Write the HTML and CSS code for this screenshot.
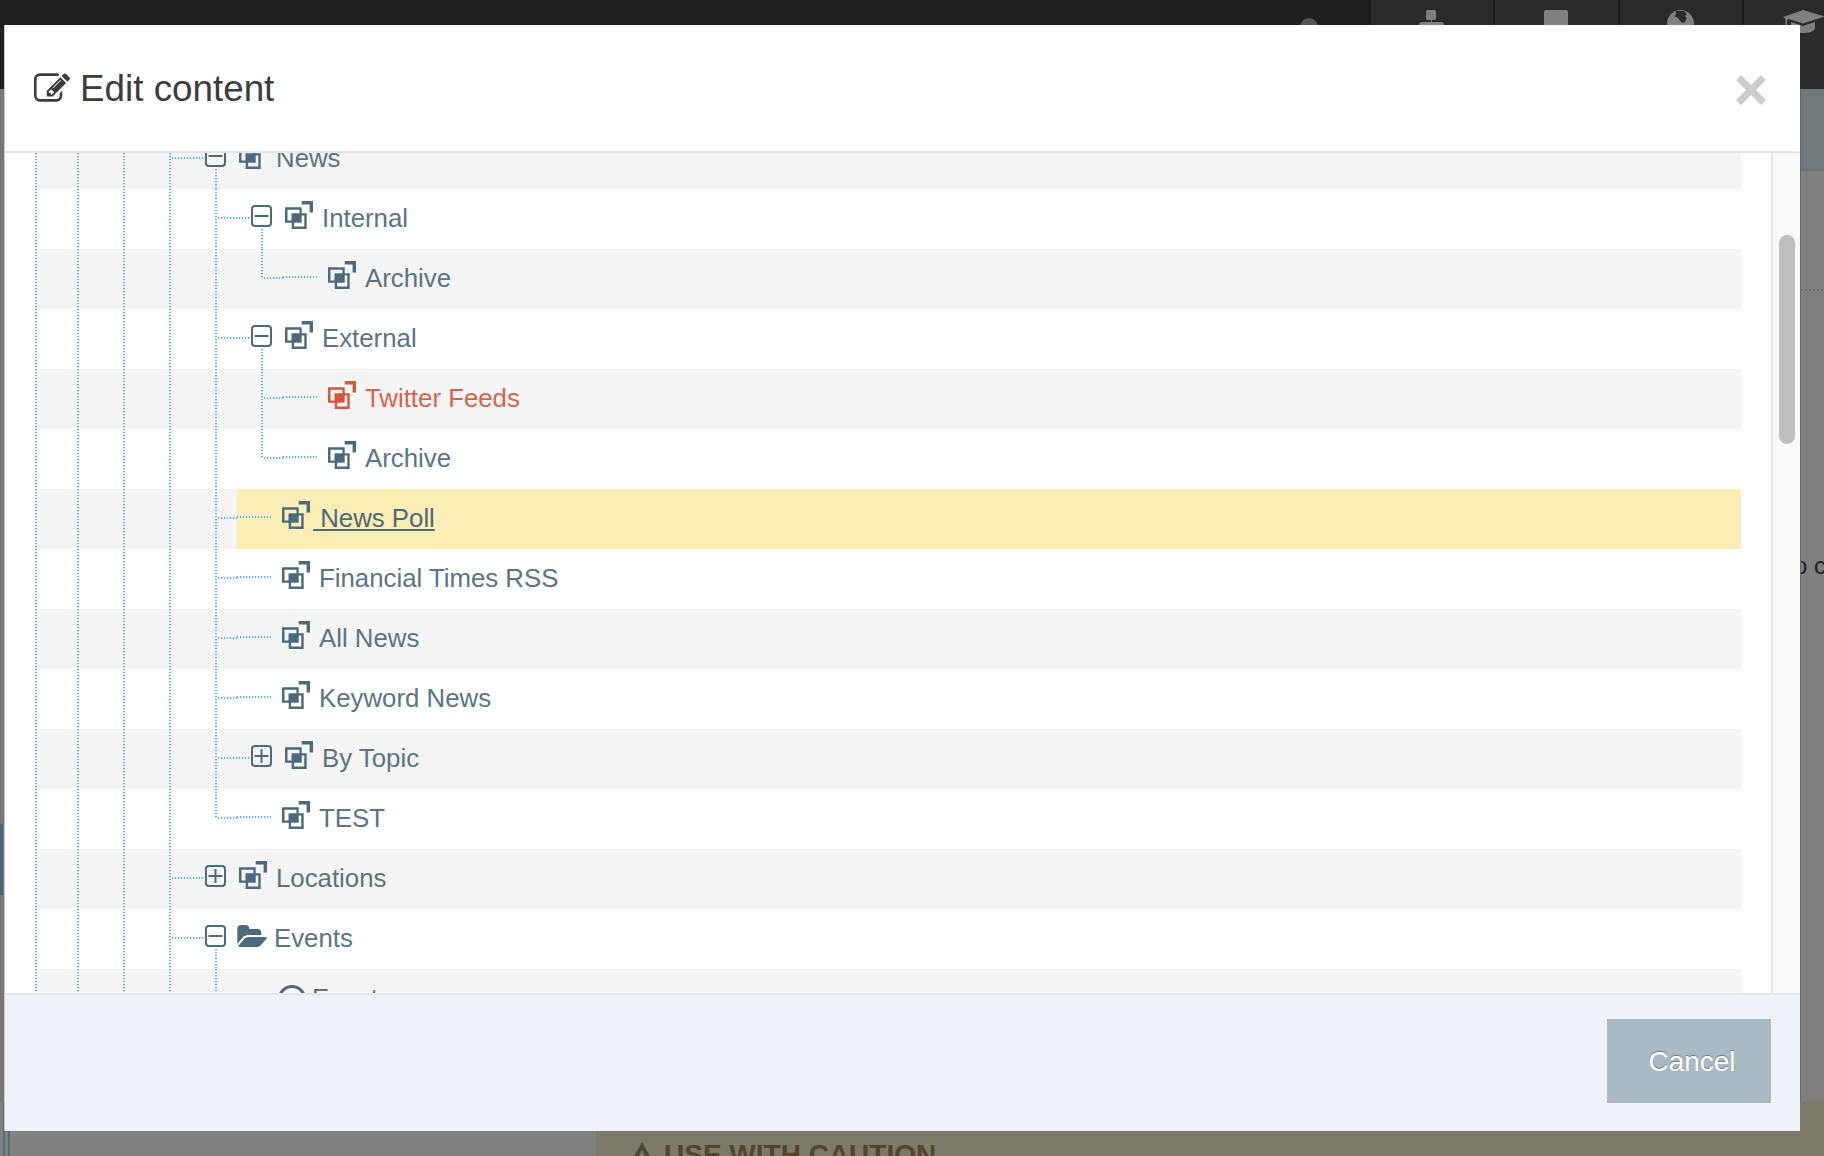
FILE: index.html
```html
<!DOCTYPE html>
<html lang="en">
<head>
<meta charset="utf-8">
<title>Edit content</title>
<link rel="stylesheet" href="styles.css">
</head>
<body>
<svg class="defs" aria-hidden="true">
  <symbol id="page" viewBox="0 0 28 28">
    <path d="M0 6.3h16.7v5.9h5v15.8H6.700v-6.200H0zM2.500 8.700v10.700h4.200v-7.200h7.700V8.700zM9.100 14.600v11H19.300v-11z" fill-rule="evenodd"/>
    <path d="M6.700 13h10v8.700h-10z"/>
    <path d="M16.700 0H28v11.400h-3.400V3.400h-7.900z"/>
  </symbol>
  <symbol id="minus" viewBox="0 0 21 22">
    <rect x="1" y="1" width="19" height="20" rx="3" fill="none" stroke="currentColor" stroke-width="2"/>
    <path d="M3.500 10h14v2h-14z"/>
  </symbol>
  <symbol id="plus" viewBox="0 0 21 22">
    <rect x="1" y="1" width="19" height="20" rx="3" fill="none" stroke="currentColor" stroke-width="2"/>
    <path d="M3.500 10h14v2h-14z"/>
    <path d="M9.500 4h2v14h-2z"/>
  </symbol>
</svg>

<div class="page">
  <header class="topbar">
    <span class="dome"></span>
    <div class="cell">
      <svg class="tb-icon tb-site" viewBox="0 0 25 24"><path d="M8.500 0h7a1.500 1.500 0 0 1 1.500 1.500v7a1.500 1.500 0 0 1-1.500 1.500H13v2h9a3 3 0 0 1 3 3v3H0v-3a3 3 0 0 1 3-3h9v-2H8.500A1.500 1.500 0 0 1 7 8.500v-7A1.500 1.500 0 0 1 8.500 0z"/></svg>
    </div>
    <div class="cell">
      <svg class="tb-icon tb-square" viewBox="0 0 24 24"><rect width="24" height="24" rx="2"/></svg>
    </div>
    <div class="cell">
      <svg class="tb-icon tb-globe" viewBox="0 0 27 27"><circle cx="13.500" cy="13.500" r="13.500"/><path class="land" d="M9 1l8 0 3 3-2 2 2 2-3 5-3-1-3-4-4-2 2-1z"/></svg>
    </div>
    <div class="cell cell-last">
      <svg class="tb-cap" viewBox="0 0 42 24"><path d="M20 0l22 6.500-22 7-14-4.500-2 1v6l1.500 6H1l1.500-6v-7L0 7z"/><path d="M8 12l12 4 12-4v6c0 3-5.500 5-12 5s-12-2-12-5z"/></svg>
    </div>
  </header>
  <div class="upper">
    <div class="left-strip"><span class="left-slab"></span></div>
    <div class="right-strip">
      <div class="right-head"></div>
      <div class="right-dots"></div>
      <div class="right-text">o c</div>
    </div>
  </div>
  <div class="lower">
    <div class="lower-left"><span class="lower-rails"></span></div>
    <div class="caution">
      <svg class="caution-icon" viewBox="0 0 22 20"><path fill-rule="evenodd" d="M11 0l11 20H0zM11 9l-3.500 7h7z"/></svg>
      <span class="caution-text">USE WITH CAUTION</span>
    </div>
  </div>
</div>

<div class="modal">
  <div class="modal-head">
    <svg class="title-icon" viewBox="0 128 1792 1408"><path d="M888 1184l116-116-152-152-116 116v56h96v96h56zm440-720q-16-16-33 1l-350 350q-17 17-1 33t33-1l350-350q17-17 1-33zm80 594v190q0 119-84.500 203.500t-203.500 84.500h-832q-119 0-203.500-84.500t-84.500-203.500v-832q0-119 84.500-203.500t203.500-84.500h832q63 0 117 25 15 7 18 23 3 17-9 29l-49 49q-14 14-32 8-23-6-45-6h-832q-66 0-113 47t-47 113v832q0 66 47 113t113 47h832q66 0 113-47t47-113v-126q0-13 9-22l64-64q15-15 35-7t20 29zm-96-738l288 288-672 672h-288v-288zm444 132l-92 92-288-288 92-92q28-28 68-28t68 28l152 152q28 28 28 68t-28 68z"/></svg>
    <h1 class="title">Edit content</h1>
    <svg class="close" viewBox="0 0 30 30"><path d="M5 0l10 10L25 0l5 5-10 10 10 10-5 5-10-10-10 10-5-5 10-10L0 5z"/></svg>
  </div>
  <div class="modal-body">
    <div class="tree-view">
      <div class="tree">
        <div class="row"><i class="g g1"></i><i class="g"></i><i class="g"></i><i class="b"></i><span class="toggle open"><svg><use href="#minus"/></svg></span><svg class="icon"><use href="#page"/></svg><span class="label">News</span></div>
        <div class="row"><i class="g g1"></i><i class="g"></i><i class="g"></i><i class="g"></i><i class="b"></i><span class="toggle open"><svg><use href="#minus"/></svg></span><svg class="icon"><use href="#page"/></svg><span class="label">Internal</span></div>
        <div class="row"><i class="g g1"></i><i class="g"></i><i class="g"></i><i class="g"></i><i class="g"></i><i class="b stub last"></i><div class="node"><i class="hline"></i><svg class="icon"><use href="#page"/></svg><span class="label">Archive</span></div></div>
        <div class="row"><i class="g g1"></i><i class="g"></i><i class="g"></i><i class="g"></i><i class="b"></i><span class="toggle open"><svg><use href="#minus"/></svg></span><svg class="icon"><use href="#page"/></svg><span class="label">External</span></div>
        <div class="row"><i class="g g1"></i><i class="g"></i><i class="g"></i><i class="g"></i><i class="g"></i><i class="b stub"></i><div class="node alert"><i class="hline"></i><svg class="icon"><use href="#page"/></svg><span class="label">Twitter Feeds</span></div></div>
        <div class="row"><i class="g g1"></i><i class="g"></i><i class="g"></i><i class="g"></i><i class="g"></i><i class="b stub last"></i><div class="node"><i class="hline"></i><svg class="icon"><use href="#page"/></svg><span class="label">Archive</span></div></div>
        <div class="row"><i class="g g1"></i><i class="g"></i><i class="g"></i><i class="g"></i><i class="b stub"></i><div class="node selected"><i class="hline"></i><svg class="icon"><use href="#page"/></svg><a class="link"> News Poll</a></div></div>
        <div class="row"><i class="g g1"></i><i class="g"></i><i class="g"></i><i class="g"></i><i class="b stub"></i><div class="node"><i class="hline"></i><svg class="icon"><use href="#page"/></svg><span class="label">Financial Times RSS</span></div></div>
        <div class="row"><i class="g g1"></i><i class="g"></i><i class="g"></i><i class="g"></i><i class="b stub"></i><div class="node"><i class="hline"></i><svg class="icon"><use href="#page"/></svg><span class="label">All News</span></div></div>
        <div class="row"><i class="g g1"></i><i class="g"></i><i class="g"></i><i class="g"></i><i class="b stub"></i><div class="node"><i class="hline"></i><svg class="icon"><use href="#page"/></svg><span class="label">Keyword News</span></div></div>
        <div class="row"><i class="g g1"></i><i class="g"></i><i class="g"></i><i class="g"></i><i class="b"></i><span class="toggle"><svg><use href="#plus"/></svg></span><svg class="icon"><use href="#page"/></svg><span class="label">By Topic</span></div>
        <div class="row"><i class="g g1"></i><i class="g"></i><i class="g"></i><i class="g"></i><i class="b stub last"></i><div class="node"><i class="hline"></i><svg class="icon"><use href="#page"/></svg><span class="label">TEST</span></div></div>
        <div class="row"><i class="g g1"></i><i class="g"></i><i class="g"></i><i class="b"></i><span class="toggle"><svg><use href="#plus"/></svg></span><svg class="icon"><use href="#page"/></svg><span class="label">Locations</span></div>
        <div class="row"><i class="g g1"></i><i class="g"></i><i class="g"></i><i class="b"></i><span class="toggle open"><svg><use href="#minus"/></svg></span><svg class="folder" viewBox="0 128 1879 1408"><path d="M1879 952q0 31-31 66l-336 396q-43 51-120.500 86.500t-143.500 35.500h-1088q-34 0-60.500-13t-26.500-43q0-31 31-66l336-396q43-51 120.500-86.500t143.500-35.500h1088q34 0 60.500 13t26.500 43zm-343-344v160h-832q-94 0-197 47.500t-164 119.500l-337 396-5 6q0-4-.5-12.500t-.5-12.500v-960q0-92 66-158t158-66h320q92 0 158 66t66 158v32h544q92 0 158 66t66 158z"/></svg><span class="label">Events</span></div>
        <div class="row"><i class="g g1"></i><i class="g"></i><i class="g"></i><i class="g"></i><i class="g g-short"></i><svg class="clock" viewBox="0 0 28 28"><circle cx="14" cy="14" r="12.500"/></svg><span class="label label-event">Events</span></div>
      </div>
    </div>
    <div class="track"><div class="thumb"></div></div>
  </div>
  <div class="modal-foot">
    <button class="cancel" type="button">Cancel</button>
  </div>
</div>
</body>
</html>
```
FILE: styles.css
```css
:root {
  --ink: #4d6a7c;
  --dot: #58aee6;
  --dot-soft: #cfe7f7;
  --vdots: repeating-linear-gradient(to bottom, var(--dot) 0 1px, var(--dot-soft) 1px 2px, transparent 2px 3px);
  --hdots: repeating-linear-gradient(to right, var(--dot) 0 1px, var(--dot-soft) 1px 2px, transparent 2px 3px);
}

* { box-sizing: border-box; }

html, body {
  margin: 0;
  height: 100%;
  overflow: hidden;
}

body {
  font-family: "Liberation Sans", Arial, sans-serif;
  background: #808080;
}

.defs { display: none; }

/* Dimmed page behind the dialog */
.page {
  height: 1156px;
  display: flex;
  flex-direction: column;
}

.topbar {
  flex: none;
  height: 89px;
  background: linear-gradient(to right, #202020 0, #202020 1100px, #1e1e1e 1366px);
  display: flex;
  justify-content: flex-end;
  overflow: hidden;
}

.dome {
  width: 18px;
  height: 18px;
  margin: 18px 51px 0 0;
  border-radius: 50%;
  background: #555;
}

.cell {
  width: 124.500px;
  background: #2a2a2a;
  border-left: 2px solid #1b1b1b;
  display: flex;
  justify-content: center;
  padding-top: 10px;
}

.cell-last {
  width: 82px;
  justify-content: flex-start;
  padding-left: 39px;
}

.tb-icon, .tb-cap { fill: #808080; flex: none; }
.tb-site { width: 25px; height: 24px; }
.tb-square { width: 24px; height: 24px; }
.tb-globe { width: 27px; height: 27px; }
.tb-globe .land { fill: #2a2a2a; }
.tb-cap { width: 42px; height: 24px; }

.upper {
  flex: 1;
  display: flex;
  justify-content: space-between;
}

.left-strip {
  width: 4px;
  background: #777;
  padding-top: 735px;
}

.left-slab {
  display: block;
  width: 3px;
  height: 71px;
  background: #4a6272;
}

.right-strip {
  width: 25px;
  border-left: 2px solid #666;
}

.right-head {
  height: 82px;
  background: #72787a;
}

.right-dots {
  height: 2px;
  margin-top: 118px;
  background: repeating-linear-gradient(to right, #6c6c6c 0 2px, transparent 2px 4px);
}

.right-text {
  margin-top: 260px;
  font-size: 24px;
  line-height: 30px;
  color: #222;
  white-space: nowrap;
  text-indent: -7px;
  overflow: hidden;
}

.lower {
  flex: none;
  height: 55px;
  display: flex;
}

.lower-left {
  flex: none;
  width: 596px;
  padding-left: 3px;
}

.lower-rails {
  display: block;
  width: 7px;
  height: 100%;
  border-left: 2px solid #5a6a75;
  border-right: 2px solid #5a6a75;
}

.caution {
  flex: 1;
  background: #7c7a6b;
  display: flex;
  align-items: flex-start;
  gap: 12px;
  padding: 40px 0 0 36px;
  overflow: hidden;
}

.caution-icon {
  flex: none;
  width: 20px;
  height: 20px;
  fill: #54452b;
}

.caution-text {
  font-weight: 700;
  font-size: 28px;
  line-height: 28px;
  color: #54452b;
}

/* Dialog */
.modal {
  position: absolute;
  top: 25px;
  left: 4px;
  width: 1796px;
  height: 1106px;
  background: #fff;
  border-left: 1px solid #c9c9c9;
  display: flex;
  flex-direction: column;
}

.modal-head {
  flex: none;
  height: 128px;
  border-bottom: 2px solid #e5e5e5;
  display: flex;
  align-items: center;
  padding: 0 34px 0 29px;
}

.title-icon {
  flex: none;
  width: 36px;
  height: 29px;
  fill: #3c3c3c;
  margin: 0 10px 2px 0;
}

.title {
  flex: 1;
  margin: 2px 0 0;
  font-weight: 400;
  font-size: 36.800px;
  line-height: 44px;
  color: #3c3c3c;
}

.close {
  flex: none;
  width: 30px;
  height: 30px;
  margin-top: 4px;
  fill: #cdcdcd;
}

.modal-body {
  flex: none;
  height: 840px;
  display: flex;
  overflow: hidden;
}

.tree-view {
  flex: 1;
  min-width: 0;
  overflow: hidden;
}

.tree {
  margin: -24px 30px 0 30px;
  color: var(--ink);
}

.row {
  height: 60px;
  display: flex;
  align-items: center;
}

/* The stripe starts one pixel in, so the first dotted rule straddles its edge */
.row:nth-child(odd) {
  background: linear-gradient(#f5f5f5, #f5f5f5) 1px 0 no-repeat;
}

.g, .b {
  flex: none;
  align-self: stretch;
  background-repeat: no-repeat;
}

.g {
  width: 46px;
  background-image: var(--vdots);
  background-size: 2px 100%;
}

.g1 {
  width: 42px;
}

.g-short {
  width: 63px;
}

.b {
  width: 36px;
  background-image: var(--vdots), var(--hdots);
  background-size: 2px 100%, calc(100% - 4px) 2px;
  background-position: 0 0, 3px 28px;
}

.b.stub {
  width: 22px;
  background-size: 2px 100%, calc(100% - 3px) 2px;
}

.b.last {
  background-size: 2px 30px, calc(100% - 3px) 2px;
}

.toggle {
  position: relative;
  flex: none;
  width: 21px;
  height: 22px;
  margin: 0 13px 6px 0;
  fill: var(--ink);
  color: var(--ink);
}

.toggle svg {
  display: block;
  width: 21px;
  height: 22px;
}

.toggle.open::after {
  content: "";
  position: absolute;
  top: 24px;
  left: 10px;
  width: 2px;
  height: 20px;
  background: var(--vdots);
}

.icon {
  flex: none;
  width: 28px;
  height: 28px;
  margin-bottom: 8px;
  fill: currentColor;
}

.folder {
  flex: none;
  width: 30px;
  height: 22px;
  margin: 0 -2px 6px -2px;
  fill: currentColor;
}

.clock {
  flex: none;
  width: 28px;
  height: 28px;
  fill: none;
  stroke: currentColor;
  stroke-width: 3px;
}

.label {
  margin: 0 0 2px 9px;
  font-size: 25.800px;
  line-height: 60px;
  white-space: nowrap;
  opacity: 0.92;
}

.label-event { margin-left: 6px; }

.node {
  flex: 1;
  align-self: stretch;
  display: flex;
  align-items: center;
}

.hline {
  flex: none;
  width: 34px;
  height: 2px;
  margin: 0 11px 4px 0;
  background: var(--hdots);
}

.node.alert { color: #d4583f; }
.node.selected { background: #fdeeb5; }

.link {
  margin: 0 0 2px 3px;
  font-size: 25.800px;
  line-height: 60px;
  white-space: pre;
  text-decoration: underline;
}

.track {
  flex: none;
  width: 29px;
  background: #f9f9f9;
  border-left: 2px solid #e8e8e8;
  padding: 82px 0 0 6px;
}

.thumb {
  width: 16px;
  height: 209px;
  border-radius: 8px;
  background: #bfbfbf;
}

.modal-foot {
  flex: none;
  height: 138px;
  background: #eff2f6;
  border-top: 2px solid #e4e7eb;
  display: flex;
  justify-content: flex-end;
  align-items: flex-start;
  padding: 24px 29px 0 0;
}

.cancel {
  width: 164px;
  height: 84px;
  border: 0;
  padding: 2px 0 0 6px;
  background: #aabac3;
  color: #fff;
  font-family: inherit;
  font-size: 28px;
  text-shadow: 0 -1px 1px rgba(0, 0, 0, 0.35);
}
```
